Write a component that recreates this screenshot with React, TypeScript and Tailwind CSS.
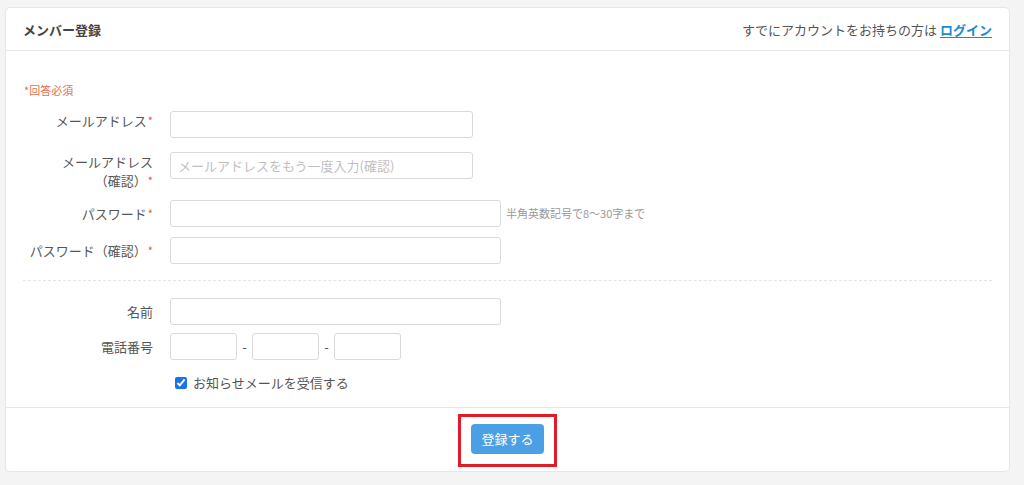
import React from 'react';

const font = { fontFamily: '"Noto Sans CJK JP", "Noto Sans", sans-serif' };

function Req() {
  return <span className="text-[#e8553a] text-[11px] align-top ml-[1px]">*</span>;
}

function TextInput({ width, placeholder }: { width: string; placeholder?: string }) {
  return (
    <input
      type="text"
      placeholder={placeholder}
      className={`${width} h-[27px] border border-[#d9d9d9] rounded-[3px] bg-white px-[7px] text-[13px] text-[#555] placeholder:text-[#c0c0c0] outline-none`}
    />
  );
}

export default function App() {
  return (
    <div className="min-h-screen bg-[#f4f4f4] pt-[7px] pl-[5px] pr-[14px] pb-[15px]" style={font}>
      <div className="w-[1005px] bg-white border border-[#e6e6e6] rounded-[5px]">
        {/* header */}
        <div className="h-[43px] px-[17px] flex items-center justify-between border-b border-[#e6e6e6]">
          <h1 className="text-[13px] font-bold text-[#444] leading-none">メンバー登録</h1>
          <p className="text-[13px] text-[#555] leading-none">
            すでにアカウントをお持ちの方は{' '}
            <a href="#" className="font-bold text-[#1d8ad0] underline underline-offset-2">ログイン</a>
          </p>
        </div>

        {/* form body */}
        <div className="pt-[32px] pb-[15px]">
          <p className="pl-[18px] text-[11px] leading-[14px] text-[#e4704f]">*回答必須</p>

          <div className="mt-[14px] flex items-start">
            <label className="w-[147px] text-right text-[13px] leading-[19px] text-[#555]">
              メールアドレス<Req />
            </label>
            <div className="ml-[17px]"><TextInput width="w-[303px]" /></div>
          </div>

          <div className="mt-[14px] flex items-start">
            <label className="w-[147px] text-right text-[13px] leading-[19px] text-[#555]">
              メールアドレス<br />（確認）<Req />
            </label>
            <div className="ml-[17px]">
              <TextInput width="w-[303px]" placeholder="メールアドレスをもう一度入力(確認)" />
            </div>
          </div>

          <div className="mt-[10px] flex items-center">
            <label className="w-[147px] text-right text-[13px] leading-[19px] text-[#555]">
              パスワード<Req />
            </label>
            <div className="ml-[17px] flex items-center">
              <TextInput width="w-[331px]" />
              <span className="ml-[5px] text-[11px] text-[#999]">半角英数記号で8〜30字まで</span>
            </div>
          </div>

          <div className="mt-[10px] flex items-center">
            <label className="w-[147px] text-right text-[13px] leading-[19px] text-[#555]">
              パスワード（確認）<Req />
            </label>
            <div className="ml-[17px]"><TextInput width="w-[331px]" /></div>
          </div>

          <div className="mx-[17px] mt-[16px] border-t border-dashed border-[#e3e3e3]" />

          <div className="mt-[17px] flex items-center">
            <label className="w-[147px] text-right text-[13px] leading-[19px] text-[#555]">名前</label>
            <div className="ml-[17px]"><TextInput width="w-[331px]" /></div>
          </div>

          <div className="mt-[8px] flex items-center">
            <label className="w-[147px] text-right text-[13px] leading-[19px] text-[#555]">電話番号</label>
            <div className="ml-[17px] flex items-center">
              <TextInput width="w-[67px]" />
              <span className="w-[15px] text-center text-[13px] text-[#555]">-</span>
              <TextInput width="w-[67px]" />
              <span className="w-[15px] text-center text-[13px] text-[#555]">-</span>
              <TextInput width="w-[67px]" />
            </div>
          </div>

          <label className="mt-[13px] ml-[169px] flex items-center text-[13px] leading-[19px] text-[#555]">
            <input type="checkbox" defaultChecked className="w-[12px] h-[12px] mr-[6px] accent-[#1a73e8]" />
            お知らせメールを受信する
          </label>
        </div>

        {/* footer */}
        <div className="border-t border-[#e6e6e6] flex justify-center pt-[6px] pb-[4px]">
          <div className="border-[3px] border-[#e01d26] px-[10px] pt-[7px] pb-[10px]">
            <button className="w-[73px] h-[30px] rounded-[4px] bg-[#4a9fe5] text-white text-[13px]">
              登録する
            </button>
          </div>
        </div>
      </div>
    </div>
  );
}
